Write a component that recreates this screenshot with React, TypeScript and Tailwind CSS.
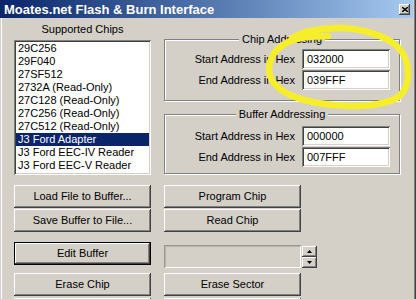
import { clsx } from "clsx";

const chips = [
  "29C256",
  "29F040",
  "27SF512",
  "2732A (Read-Only)",
  "27C128 (Read-Only)",
  "27C256 (Read-Only)",
  "27C512 (Read-Only)",
  "J3 Ford Adapter",
  "J3 Ford EEC-IV Reader",
  "J3 Ford EEC-V Reader",
];

// classic 3D edges
const raised =
  "shadow-[inset_-1px_-1px_0_#404040,inset_1px_1px_0_#ffffff,inset_-2px_-2px_0_#808080,inset_2px_2px_0_#d4d0c8]";
const sunken =
  "shadow-[inset_1px_1px_0_#808080,inset_-1px_-1px_0_#ffffff,inset_2px_2px_0_#404040,inset_-2px_-2px_0_#d4d0c8]";

function Button({ label, isDefault }: { label?: string; isDefault?: boolean }) {
  return (
    <div
      className={clsx(
        "h-[23px] w-[137px] shrink-0 flex items-center justify-center bg-[#d4d0c8] text-black",
        raised,
        isDefault && "border border-black"
      )}
    >
      {label}
    </div>
  );
}

function HexRow({ label, value }: { label: string; value: string }) {
  return (
    <div className="flex items-center justify-end gap-[7px] pr-[9px]">
      <span>{label}</span>
      <div className={clsx("w-[88px] h-[20px] bg-white pl-[5px] flex items-center", sunken)}>
        {value}
      </div>
    </div>
  );
}

function Group({
  title,
  className,
  children,
}: {
  title: string;
  className?: string;
  children: React.ReactNode;
}) {
  return (
    <fieldset
      className={clsx(
        "w-[236px] border border-[#808080] shadow-[inset_1px_1px_0_#ffffff,1px_1px_0_#ffffff]",
        className
      )}
    >
      <legend align="center" className="mx-auto px-[3px] leading-[13px] bg-[#d4d0c8]">
        {title}
      </legend>
      <div className="flex flex-col gap-px">{children}</div>
    </fieldset>
  );
}

function Arrow({ up }: { up?: boolean }) {
  return (
    <svg width="5" height="3" viewBox="0 0 5 3">
      <path d={up ? "M2.5 0 L5 3 L0 3 Z" : "M0 0 L5 0 L2.5 3 Z"} fill="#000" />
    </svg>
  );
}

// hand drawn yellow marker ring round the chip addresses
const ring: [number, number][] = [
  [292, 38], [310, 31], [340, 28], [368, 32], [393, 43], [406, 60], [407, 83],
  [398, 97], [378, 104], [350, 106], [318, 103], [290, 95], [274, 83], [269, 70],
  [273, 55], [283, 45], [300, 38], [328, 36],
];

function ringPath(pts: [number, number][]) {
  let d = `M${pts[0][0]} ${pts[0][1]}`;
  for (let i = 0; i < pts.length - 1; i++) {
    const p0 = pts[i - 1] ?? pts[i];
    const p1 = pts[i];
    const p2 = pts[i + 1];
    const p3 = pts[i + 2] ?? p2;
    const c1 = [p1[0] + (p2[0] - p0[0]) / 6, p1[1] + (p2[1] - p0[1]) / 6];
    const c2 = [p2[0] - (p3[0] - p1[0]) / 6, p2[1] - (p3[1] - p1[1]) / 6];
    d += ` C${c1[0]} ${c1[1]} ${c2[0]} ${c2[1]} ${p2[0]} ${p2[1]}`;
  }
  return d;
}

export default function App() {
  return (
    <div className="relative w-[416px] h-[299px] overflow-hidden bg-[#d4d0c8] pr-[3px] flex flex-col font-['Liberation_Sans',Arial,sans-serif] text-[11px] leading-[13px] text-black shadow-[inset_-1px_0_0_#404040,inset_-2px_0_0_#808080]">
      {/* Title bar */}
      <div className="h-[18px] shrink-0 flex items-center justify-between bg-gradient-to-r from-[#0a246a] to-[#a6caf0] pl-[4px] pr-[3px]">
        <span className="text-white font-bold text-[13px] leading-[15px]">
          Moates.net Flash &amp; Burn Interface
        </span>
        <div className={clsx("w-[11px] h-[11px] flex items-center justify-center bg-[#d4d0c8]", raised)}>
          <svg width="6" height="5" viewBox="0 0 6 5">
            <path d="M0 0 L6 5 M6 0 L0 5" stroke="#000" strokeWidth="1.4" />
          </svg>
        </div>
      </div>

      {/* Body */}
      <div className="flex-1 pl-[14px] shadow-[inset_1px_0_0_#d4d0c8,inset_2px_0_0_#ffffff]">
        <div className="flex gap-[13px]">
          {/* Chip list */}
          <div className="w-[137px] flex flex-col items-center pt-[5px]">
            <span>Supported Chips</span>
            <div className={clsx("mt-[4px] w-[137px] h-[135px] bg-white p-[2px]", sunken)}>
              {chips.map((c) => (
                <div
                  key={c}
                  className={clsx(
                    "h-[13px] pl-[2px] whitespace-nowrap",
                    c === "J3 Ford Adapter" && "bg-[#0a246a] text-white"
                  )}
                >
                  {c}
                </div>
              ))}
            </div>
          </div>

          {/* Addressing */}
          <div className="flex flex-col pt-[15px]">
            <Group title="Chip Addressing" className="pt-[3px] pb-[10px]">
              <HexRow label="Start Address in Hex" value="032000" />
              <HexRow label="End Address in Hex" value="039FFF" />
            </Group>
            <Group title="Buffer Addressing" className="mt-[7px] pt-[5px] pb-[6px]">
              <HexRow label="Start Address in Hex" value="000000" />
              <HexRow label="End Address in Hex" value="007FFF" />
            </Group>
          </div>
        </div>

        {/* Buttons */}
        <div className="mt-[10px] flex flex-col">
          <div className="flex gap-[13px]">
            <Button label="Load File to Buffer..." />
            <Button label="Program Chip" />
          </div>
          <div className="mt-px flex gap-[13px]">
            <Button label="Save Buffer to File..." />
            <Button label="Read Chip" />
          </div>
          <div className="mt-[10px] flex items-start gap-[13px]">
            <Button label="Edit Buffer" isDefault />
            <div className="mt-[3px] flex">
              <div
                className={clsx(
                  "w-[137px] h-[23px] bg-[#d4d0c8]",
                  "shadow-[inset_1px_1px_0_#9a9792,inset_-1px_-1px_0_#ffffff,inset_2px_2px_0_#b8b4ad]"
                )}
              />
              <div className="ml-px mt-px flex flex-col">
                <div className={clsx("w-[15px] h-[11px] flex items-center justify-center bg-[#d4d0c8]", raised)}>
                  <Arrow up />
                </div>
                <div className={clsx("w-[15px] h-[11px] flex items-center justify-center bg-[#d4d0c8]", raised)}>
                  <Arrow />
                </div>
              </div>
            </div>
          </div>
          <div className="mt-[5px] flex gap-[13px]">
            <Button label="Erase Chip" />
            <Button label="Erase Sector" />
          </div>
          <div className="mt-[2px] flex gap-[13px]">
            <Button />
            <Button />
          </div>
        </div>
      </div>

      {/* marker annotation */}
      <svg
        className="absolute inset-0 pointer-events-none"
        width="416"
        height="299"
        viewBox="0 0 416 299"
      >
        <path
          d={ringPath(ring)}
          fill="none"
          stroke="#f6ee2a"
          strokeWidth="6.5"
          strokeLinecap="round"
          strokeLinejoin="round"
        />
      </svg>
    </div>
  );
}
